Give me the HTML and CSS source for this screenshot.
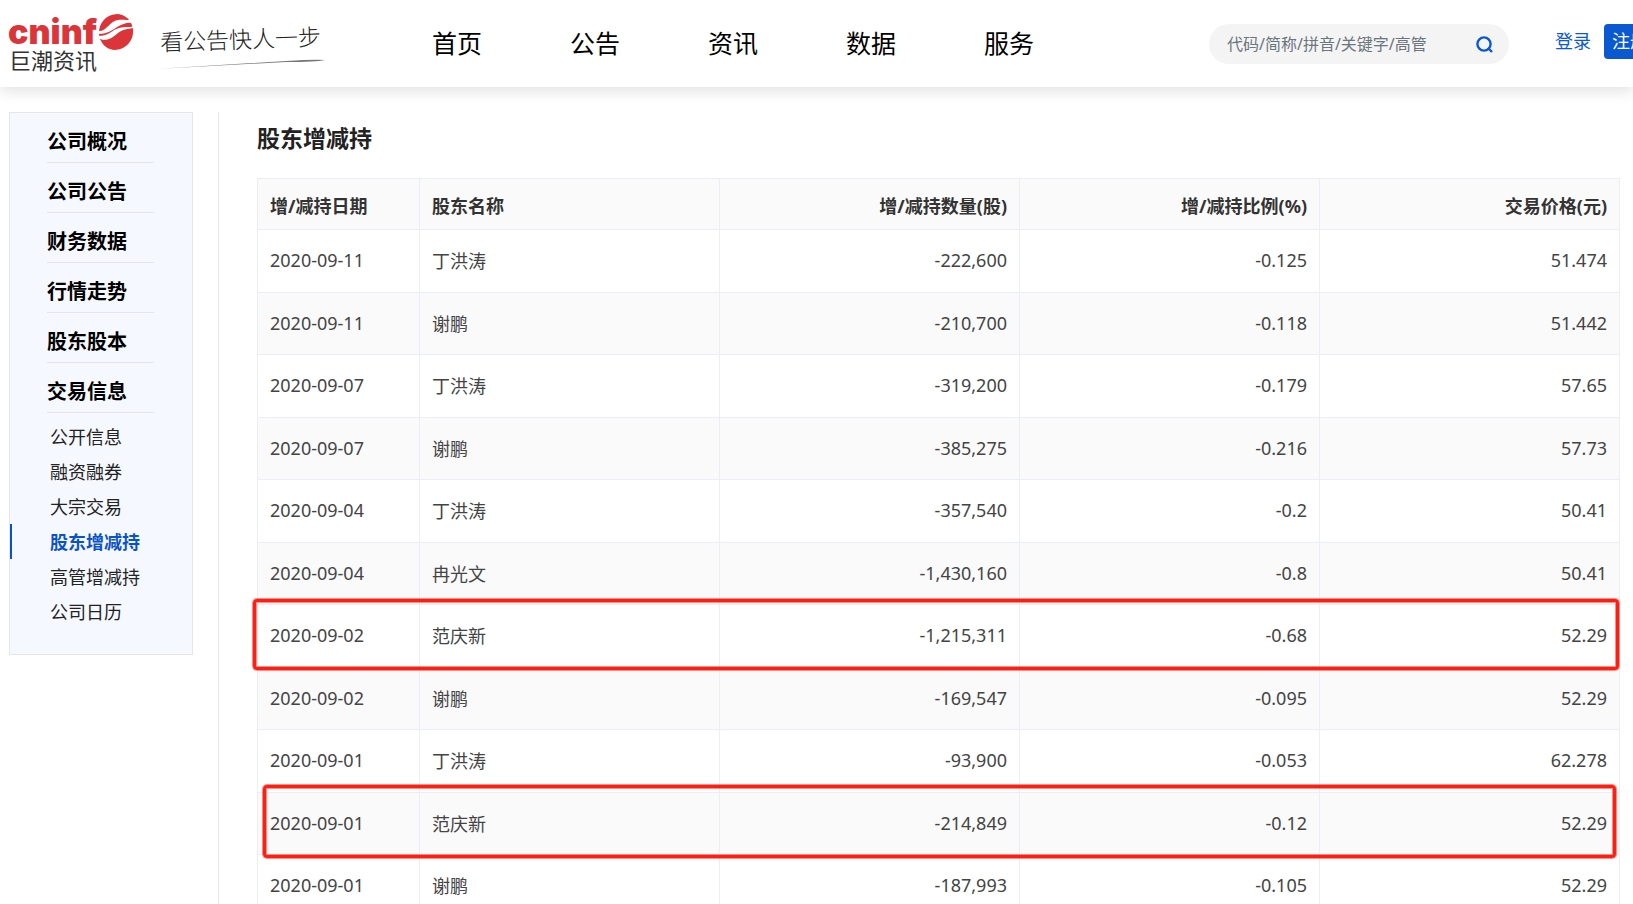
FILE: index.html
```html
<!DOCTYPE html>
<html lang="zh-CN">
  <head>
    <meta charset="UTF-8" />
    <meta name="viewport" content="width=device-width, initial-scale=1.0" />
    <title>股东增减持 - 巨潮资讯</title>
    <link rel="stylesheet" href="styles.css">
  </head>
  <body>
    <header class="header">
      <a class="logo" href="#">
        <span class="logo-top">
          <span class="logo-en">cninf</span>
          <svg class="logo-mark" viewBox="0 0 36 36" aria-hidden="true">
            <ellipse cx="18" cy="18" rx="17" ry="18" fill="#db353a" transform="rotate(20 18 18)" />
            <path d="M0 17 C9 18 11 7 20 6 C25 5 29 7 34 5 L36 9 C28 8 25 10 19 13 C13 17 9 20 0 20 Z" fill="#fff" />
            <path d="M0 22 C12 22 13 16 21 14 C28 12 31 14 36 12 L36 14 C29 15 25 15 20 19 C15 23 12 26 5 26 L0 24 Z" fill="#fff" />
          </svg>
        </span>
        <span class="logo-cn">巨潮资讯</span>
      </a>
      <div class="slogan">
        <span class="slogan-text">看公告快人一步</span>
        <svg class="slogan-line" viewBox="0 0 170 12" aria-hidden="true">
          <path d="M0 10 L130 2 Q160 0 169 1 Q160 3 130 3 Z" fill="#777" />
        </svg>
      </div>

      <nav class="nav">
        <a href="#">首页</a>
        <a href="#">公告</a>
        <a href="#">资讯</a>
        <a href="#">数据</a>
        <a href="#">服务</a>
      </nav>

      <!-- Search box -->
      <form class="search" role="search" onsubmit="return false;">
        <input type="search" placeholder="代码/简称/拼音/关键字/高管" aria-label="搜索" />
        <button type="submit" aria-label="搜索">
          <svg viewBox="0 0 18 18" aria-hidden="true">
            <circle cx="8" cy="9" r="6.6" />
            <path d="M12 13 L16 17" />
          </svg>
        </button>
      </form>
      <div class="account">
        <a class="login" href="#">登录</a>
        <a class="register" href="#">注册</a>
      </div>
    </header>

    <div class="page">
      <aside class="sidebar">
        <ul class="menu">
          <li><a href="#">公司概况</a></li>
          <li><a href="#">公司公告</a></li>
          <li><a href="#">财务数据</a></li>
          <li><a href="#">行情走势</a></li>
          <li><a href="#">股东股本</a></li>
          <li><a href="#">交易信息</a></li>
        </ul>
        <ul class="submenu">
          <li><a href="#">公开信息</a></li>
          <li><a href="#">融资融券</a></li>
          <li><a href="#">大宗交易</a></li>
          <li><a class="active" href="#">股东增减持</a></li>
          <li><a href="#">高管增减持</a></li>
          <li><a href="#">公司日历</a></li>
        </ul>
      </aside>

      <main class="content">
        <h1>股东增减持</h1>
        <table class="holdings">
          <thead>
            <tr>
              <th class="date">增/减持日期</th>
              <th>股东名称</th>
              <th class="num">增/减持数量(股)</th>
              <th class="num">增/减持比例(%)</th>
              <th class="num">交易价格(元)</th>
            </tr>
          </thead>
          <tbody>
            <tr><td>2020-09-11</td><td>丁洪涛</td><td class="num">-222,600</td><td class="num">-0.125</td><td class="num">51.474</td></tr>
            <tr><td>2020-09-11</td><td>谢鹏</td><td class="num">-210,700</td><td class="num">-0.118</td><td class="num">51.442</td></tr>
            <tr><td>2020-09-07</td><td>丁洪涛</td><td class="num">-319,200</td><td class="num">-0.179</td><td class="num">57.65</td></tr>
            <tr><td>2020-09-07</td><td>谢鹏</td><td class="num">-385,275</td><td class="num">-0.216</td><td class="num">57.73</td></tr>
            <tr><td>2020-09-04</td><td>丁洪涛</td><td class="num">-357,540</td><td class="num">-0.2</td><td class="num">50.41</td></tr>
            <tr><td>2020-09-04</td><td>冉光文</td><td class="num">-1,430,160</td><td class="num">-0.8</td><td class="num">50.41</td></tr>
            <tr class="marked"><td>2020-09-02<span class="mark mark-wide"></span></td><td>范庆新</td><td class="num">-1,215,311</td><td class="num">-0.68</td><td class="num">52.29</td></tr>
            <tr><td>2020-09-02</td><td>谢鹏</td><td class="num">-169,547</td><td class="num">-0.095</td><td class="num">52.29</td></tr>
            <tr><td>2020-09-01</td><td>丁洪涛</td><td class="num">-93,900</td><td class="num">-0.053</td><td class="num">62.278</td></tr>
            <tr class="marked"><td>2020-09-01<span class="mark mark-narrow"></span></td><td>范庆新</td><td class="num">-214,849</td><td class="num">-0.12</td><td class="num">52.29</td></tr>
            <tr><td>2020-09-01</td><td>谢鹏</td><td class="num">-187,993</td><td class="num">-0.105</td><td class="num">52.29</td></tr>
          </tbody>
        </table>
      </main>
    </div>
  </body>
</html>
```

FILE: styles.css
```css
* {
  box-sizing: border-box;
}

body {
  margin: 0;
  height: 100vh;
  overflow: hidden;
  font-family: "Noto Sans", "Noto Sans CJK SC", sans-serif;
  font-size: 18px;
  color: #222;
  background-color: #fff;
}

a {
  color: inherit;
  text-decoration: none;
}

ul {
  list-style: none;
  margin: 0;
  padding: 0;
}

/* Header */
.header {
  display: flex;
  align-items: flex-start;
  height: 87px;
  padding-left: 8px;
  background-color: #fff;
  box-shadow: 0 4px 14px rgba(0, 0, 0, 0.12);
}

.header > * {
  flex-shrink: 0;
}

.logo {
  width: 127px;
  padding-top: 14px;
}

.logo-top {
  display: flex;
  align-items: flex-start;
  height: 34px;
}

.logo-en {
  width: 90px;
  font-family: Inter, sans-serif;
  font-size: 34px;
  font-weight: 900;
  line-height: 36px;
  color: #db353a;
}

.logo-mark {
  width: 36px;
  height: 36px;
}

.logo-cn {
  display: block;
  font-size: 22px;
  line-height: 24px;
  padding-left: 1px;
  color: #333;
}

.slogan {
  width: 170px;
  margin-left: 21px;
  padding-top: 22px;
}

.slogan-text {
  display: block;
  padding-left: 4px;
  font-family: "Noto Sans CJK SC", sans-serif;
  font-size: 23px;
  font-weight: 300;
  line-height: 32px;
  color: #222;
  white-space: nowrap;
  transform: rotate(-2deg);
}

.slogan-line {
  display: block;
  width: 170px;
  height: 12px;
  margin-top: 5px;
}

.nav {
  display: flex;
  gap: 88px;
  margin-left: 106px;
  font-size: 25px;
  line-height: 86px;
  color: #000;
}

.search {
  display: flex;
  align-items: center;
  width: 300px;
  height: 40px;
  margin-top: 24px;
  margin-left: auto;
  padding: 0 15px 0 18px;
  border-radius: 20px;
  background-color: #f4f4f4;
}

.search input {
  flex: 1;
  min-width: 0;
  padding: 0;
  border: none;
  outline: none;
  background: none;
  font-family: inherit;
  font-size: 16px;
  color: #333;
}

.search input::placeholder {
  color: #6c757d;
}

.search button {
  display: flex;
  padding: 0;
  border: none;
  background: none;
  cursor: pointer;
}

.search svg {
  width: 18px;
  height: 18px;
  fill: none;
  stroke: #0a59d1;
  stroke-width: 2.4;
}

/* Wider than the room left, the register button runs off the right edge */
.account {
  display: flex;
  gap: 13px;
  width: 124px;
  margin-top: 24px;
  padding-left: 46px;
  line-height: 35px;
  white-space: nowrap;
}

.login {
  color: #0a59d1;
}

.register {
  padding: 0 8px;
  border-radius: 4px;
  background-color: #0a59d1;
  color: #fff;
}

/* Page body */
.page {
  display: flex;
  align-items: flex-start;
  padding: 25px 13px 0 9px;
}

.sidebar {
  flex: none;
  width: 184px;
  padding-bottom: 25px;
  border: 1px solid #e6e6e6;
  background-color: #f5f8ff;
}

.menu {
  padding: 0 38px 6px 37px;
}

.menu li {
  height: 50px;
  border-bottom: 1px solid #e6e6e6;
  font-size: 20px;
  font-weight: bold;
  line-height: 58px;
  color: #000;
}

.submenu a {
  display: block;
  height: 35px;
  padding-left: 38px;
  border-left: 2px solid transparent;
  line-height: 36px;
}

.submenu .active {
  border-left-color: #0a52c8;
  font-weight: bold;
  color: #0a52c8;
}

.content {
  flex: 1;
  min-width: 0;
  margin-left: 25px;
  padding-left: 38px;
  border-left: 1px solid #e6e6e6;
}

.content h1 {
  margin: 0 0 14px;
  font-size: 23px;
  line-height: 52px;
}

/* Holdings table */
.holdings {
  width: 100%;
  table-layout: fixed;
  border-collapse: collapse;
  color: #444;
}

.holdings th,
.holdings td {
  padding: 0 12px 2px;
  border: 1px solid #ebeef5;
  text-align: left;
}

.holdings th {
  height: 51px;
  padding-top: 4px;
  background-color: #fafafa;
  color: #333;
}

.holdings .date {
  width: 162px;
}

.holdings td {
  height: 63px;
}

.holdings tr:nth-child(even) td {
  height: 62px;
  background-color: #fafafa;
}

.holdings .num {
  text-align: right;
}

/* Red frames around the highlighted rows */
.marked {
  position: relative;
}

.mark {
  position: absolute;
  border: 3px solid #ff1e12;
  border-radius: 4px;
  box-shadow: 0 0 0 1px rgba(255, 30, 18, 0.5), inset 0 0 0 1px rgba(255, 30, 18, 0.5);
  pointer-events: none;
}

.mark-wide {
  inset: -6px 1px -2px -5px;
}

.mark-narrow {
  inset: -8px 4px -3px 5px;
}
```
